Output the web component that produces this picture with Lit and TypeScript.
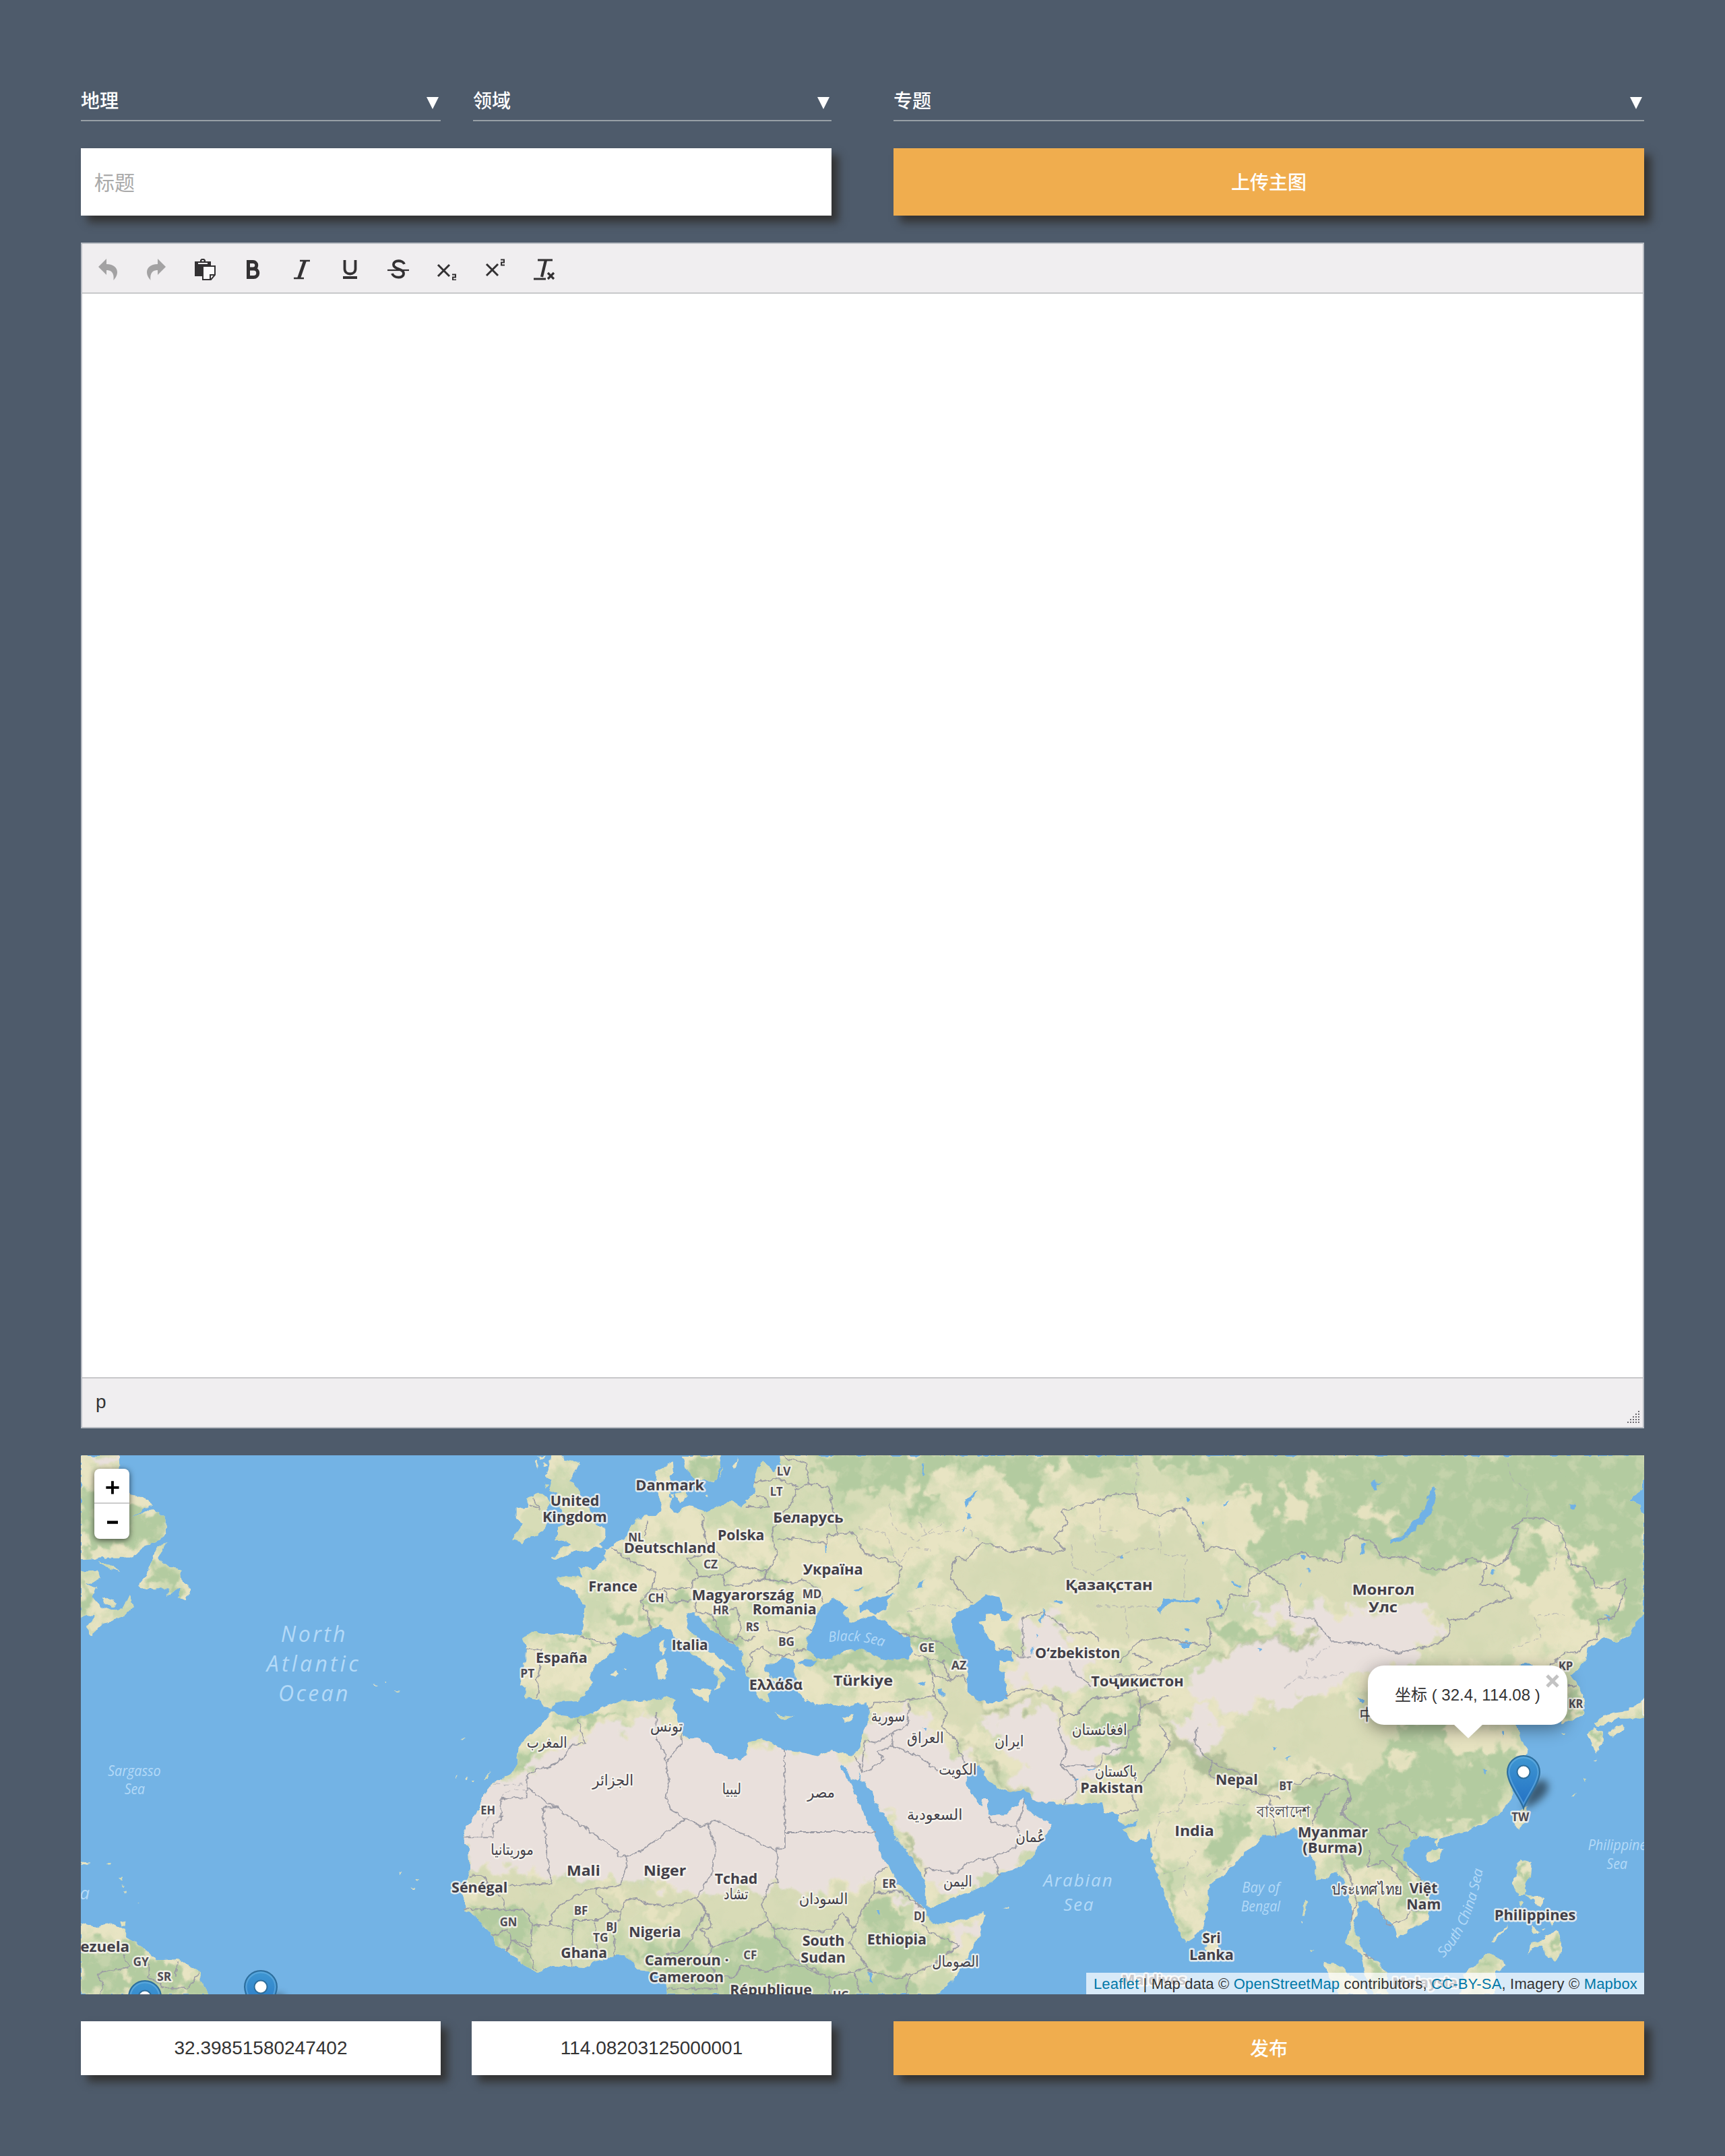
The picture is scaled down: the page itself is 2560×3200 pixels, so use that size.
import { LitElement, html, svg, css } from "lit";
import { customElement } from "lit/decorators.js";

/* Map geometry is digitised in sheets; each sheet has an origin and a scale. */
type Sheet = [number, number, number, number];
const N1: Sheet = [100, 2140, 2.6133, 3];
const N2: Sheet = [660, 2140, 3, 3];
const N3: Sheet = [1100, 2140, 3, 3];
const N4: Sheet = [1560, 2140, 3, 3];
const N5: Sheet = [2000, 2140, 3, 3];
const S1: Sheet = [100, 2540, 2.8, 2.8];
const S2: Sheet = [620, 2540, 3, 3];
const S3: Sheet = [1100, 2540, 3, 3];
const S4: Sheet = [1560, 2540, 3, 3];
const S5: Sheet = [1980, 2540, 3, 2.8];

const pts = (s: Sheet, d: string) =>
  d.trim().split(/\s+/).map((p) => {
    const [x, y] = p.split(",").map(Number);
    return `${(s[0] + x / s[2]).toFixed(1)} ${(s[1] + y / s[3]).toFixed(1)}`;
  }).join(" L");
const path = (...parts: [Sheet, string][]) => "M" + parts.map(([s, d]) => pts(s, d)).join(" L") + "Z";
const line = (s: Sheet, d: string) => "M" + pts(s, d);

const mainland = path(
  [N3, "170,40 175,100 150,135 125,115 100,85 75,110 60,150 60,190 65,235 20,262 20,280 0,290"],
  [N2, "1280,262 1215,285 1160,312 1120,290 1075,285 1045,310 1020,315 1005,285 1010,230 1000,185 1005,150 1020,130 1015,88 975,118 945,130 940,180 955,250 968,300 940,330 910,330 850,345 835,375 820,400 795,430 750,465 715,480 715,525 660,565 610,560 598,550 610,600 545,598 500,605 510,635 575,655 600,700 622,735 620,800 608,865 520,855 470,860 440,855 390,845 345,875 360,910 358,970 345,1050 335,1080 360,1100 358,1140 420,1145 445,1180 475,1185 500,1160 590,1155 625,1120 660,1070 645,1050 660,1010 700,970 750,935 768,905 760,875 795,852 870,870 920,835 960,815 1000,830 1020,870 1060,900 1100,950 1150,975 1195,1010 1220,1055 1205,1105 1225,1090 1245,1050 1225,1010 1240,990 1288,1020 1280,1000 1230,970 1190,940 1160,925 1130,880 1085,830 1075,770 1110,755 1120,775 1150,800 1200,850 1290,900 1320,930"],
  [N3, "5,980 20,1030 50,1090 80,1130 110,1160 130,1155 120,1120 150,1100 130,1060 105,1010 110,985 150,985 180,965 230,970 240,990 235,1040 250,1110 290,1150 340,1180 400,1160 450,1180 500,1170 560,1160 570,1200"],
  [S3, "560,70 540,110 525,160 505,195 430,185 400,175 340,200 280,185 200,175 130,140 90,120 30,135 20,190 0,220"],
  [S2, "1430,222 1330,185 1290,145 1240,120 1180,115 1175,60 1155,40"],
  [N2, "1035,1210 1015,1180 1035,1150 985,1135 940,1150 860,1155 780,1150 690,1190 640,1215 590,1225 510,1218 480,1195 470,1195"],
  [S2, "580,10 560,50 500,100 465,140 445,190 440,240 420,280 335,320 300,370 270,440 215,520 200,565 225,610 230,700 215,750 195,810 210,850 210,880 250,905 300,960 335,1000 350,1045 400,1070 460,1120 525,1160 600,1130 690,1135 740,1140 800,1110 870,1090 920,1085 950,1110 980,1155 1070,1165 1100,1190 1110,1230 1100,1290"],
  [S3, "830,1290 950,1190 1010,1090 1060,1000 1085,910 1070,900 1030,915 950,935 870,950 840,935 825,900 800,860 740,810 700,770 660,690 620,640 600,560 555,490 545,450 490,330 450,260 445,240 460,245 490,300 515,315 530,258 528,310 545,310 570,345 610,430 660,490 690,570 740,620 790,700 815,760 815,830 830,865 860,868 950,830 1050,790 1120,755 1160,720 1230,700 1300,650 1315,600 1380,520 1360,490 1300,460 1265,420 1255,385 1230,420 1180,455 1110,465 1095,430 1095,390 1075,390 1070,430 1030,370 1000,310 1010,280 1060,240 1090,300 1140,345 1200,360 1260,345 1290,385 1340,405 1440,415"],
  [S4, "70,415 230,405 240,450 300,460 300,490 330,505 385,480 375,510 320,530 350,570 380,582 420,565 430,530 445,570 450,650 490,780 540,900 570,990 600,1030 630,1010 680,950 700,850 700,770 760,735 830,670 870,620 920,590 940,550 1000,550 1050,535 1080,515 1110,560 1140,610 1180,680 1180,755 1230,745 1270,710"],
  [S5, "40,700 60,750 72,800 78,860 52,960 80,980 120,1010 135,1090 180,1190 240,1190 230,1090 195,1040 130,1000 108,940 82,900 100,850 112,788 140,788 190,815 220,860 270,890 280,942 340,905 420,870 430,800 400,710 350,660 310,620 310,580 350,530 400,515 450,530 460,560 470,530 540,510 600,490 680,460 750,410 790,360 800,300 840,220 862,165 830,120 815,60"],
  [N5, "745,1250 700,1240 660,1200 720,1120 700,1050 760,1000 785,978 810,995 850,1020 900,1080 950,1100 940,1150 960,1200 950,1255 1000,1240 1050,1215 1055,1160 1030,1090 990,1040 1060,980 1070,920 1100,900 1140,865 1190,890 1250,865 1280,810 1320,770 1350,740 1350,330 1310,315 1300,280 1258,260 1285,235 1350,190 1350,40"],
);

const islands: [Sheet, string][] = [
  [N2, "475,40 530,40 525,80 598,90 585,130 555,175 600,215 610,250 640,290 660,330 670,370 715,385 715,420 690,450 705,465 620,485 560,490 530,510 475,528 520,470 560,455 530,440 485,435 510,420 510,380 560,350 520,300 480,260 500,230 470,210 470,170 450,150 465,110"],
  [N2, "410,232 450,240 475,270 450,310 455,360 440,400 380,430 340,450 305,430 330,390 345,360 320,345 320,295 365,290 370,250"],
  [N2, "1050,40 1070,110 1095,150 1110,165 1200,180 1215,150 1228,90 1230,40"],
  [N2, "1280,110 1305,72 1300,100 1288,124"], [N2, "1222,165 1238,112 1232,150"], [N2, "1030,225 1075,215 1080,250 1050,270 1035,250"],
  [N2, "1000,225 1022,228 1020,248 1002,244"], [N2, "1160,238 1176,240 1170,250"],
  [N2, "405,90 414,85 412,125"], [N2, "415,60 440,60 425,78"], [N2, "440,90 460,105 445,112"], [N2, "445,185 460,195 448,212"],
  [N2, "960,895 980,880 980,935 967,948 955,920"], [N2, "945,985 980,960 993,1000 980,1060 950,1065 945,1010"],
  [N2, "1085,1105 1110,1098 1190,1100 1175,1130 1172,1158 1120,1130"], [N2, "738,1035 765,1020 775,1030 760,1046"], [N2, "790,1015 808,1018 800,1024"],
  [N3, "145,1210 180,1218 235,1225 190,1233"], [N3, "445,1232 505,1212 490,1235 465,1248"], [N3, "280,1145 300,1150 290,1160"], [N3, "130,1045 165,1050 160,1085"],
  [S4, "690,975 730,1010 745,1070 715,1090 690,1060 685,1010"],
  [N5, "1065,1300 1100,1275 1140,1290 1135,1340 1110,1390 1085,1350"],
  [N5, "1100,1260 1140,1220 1200,1205 1250,1200 1290,1160 1350,1120 1350,1240 1290,1230 1250,1235 1190,1235 1120,1270"],
  [N5, "1160,1295 1220,1255 1232,1280 1175,1315"], [N5, "945,1298 970,1294 960,1305"],
  [S5, "835,400 860,395 850,450 825,500 795,465"], [S5, "410,600 440,575 490,570 470,615 435,630 412,620"],
  [S5, "815,630 835,615 875,630 870,690 845,720 850,760 830,770 795,720 800,690 815,690"],
  [S5, "865,765 905,770 940,780 920,810 890,785"], [S5, "820,790 845,800 830,815"], [S5, "878,895 912,918 890,925"], [S5, "925,900 948,900 935,915"],
  [S5, "955,820 980,830 970,890 960,880"], [S5, "850,760 880,770 870,780"],
  [S5, "865,1015 875,960 930,950 990,905 1015,960 1010,1000 980,1040 940,1010 925,970 880,985"],
  [S5, "700,950 780,880 770,900 710,955"], [S5, "580,1090 640,1050 690,1005 770,1050 720,1080 720,1190 560,1190"],
  [S4, "1210,1115 1290,1130 1320,1170 1380,1200 1420,1290 1300,1290 1240,1180"],
  [S4, "1128,845 1138,850 1130,905 1118,912"], [S4, "1112,935 1122,935 1118,945"], [S4, "1155,1060 1168,1068 1160,1076"],
  [S5, "1110,275 1126,275 1115,290"], [S5, "1055,355 1080,335 1070,350"], [S5, "1155,205 1168,198 1160,208"],
  [N1, "30,40 190,40 205,100 190,140 245,235 290,245 330,275 250,335 330,300 380,340 382,410 340,450 300,460 250,515 150,515 30,525"],
  [N1, "120,535 165,545 205,580 150,562"],
  [N1, "385,445 350,520 380,545 440,570 445,610 475,655 460,705 430,690 440,650 380,690 400,655 280,655 275,640 310,590 340,480"],
  [N1, "30,575 120,572 125,610 70,635 115,645 100,690 130,735 180,750 215,745 240,685 258,730 220,775 140,810 90,858 70,830 110,770 30,785"],
  [N1, "130,690 190,715 180,735 140,715"],
  [S1, "30,875 110,895 180,880 240,910 250,945 320,985 370,1035 460,1030 545,1080 560,1130 600,1200 30,1200"],
  [S1, "222,880 242,875 240,895 225,895"], [S1, "40,622 92,625 90,637 40,638"],
  [S1, "216,690 230,688 226,702 218,704"], [S1, "233,742 243,744 242,755"], [S1, "225,718 234,720 231,728"], [S1, "168,630 182,630 176,640"], [S1, "283,795 292,795 290,801"],
  [S1, "1376,665 1390,668 1382,675"], [S1, "1425,730 1438,732 1430,740"], [S1, "1452,697 1462,699 1456,706"],
  [S2, "295,300 320,268 305,300"], [S2, "240,310 255,308 250,320"], [S2, "205,302 220,292 214,306"], [S2, "165,285 172,285 170,298"], [S2, "190,122 208,122 200,128"],
  [S3, "1162,875 1195,873 1190,882"], [N1, "1180,1078 1205,1080 1195,1086"], [N1, "1225,1070 1235,1070 1230,1077"], [N1, "1268,1110 1292,1112 1280,1117"],
];

const lakes: [Sheet, string][] = [
  [N3, "290,890 315,830 350,740 400,705 440,710 475,735 455,765 485,805 530,785 590,775 640,800 690,840 750,880 765,930 740,965 690,970 640,972 570,940 520,925 450,935 400,965 340,960 300,930"],
  [N3, "530,765 525,730 590,695 680,675 645,710 640,745 600,770 560,745"], [N3, "250,985 280,970 340,975 320,1000 270,995"],
  [N3, "940,800 960,765 1030,725 1090,682 1150,695 1165,755 1210,770 1200,785 1165,805 1150,765 1090,770 1080,800 1060,805 1100,870 1140,925 1200,930 1210,975 1145,980 1145,1010 1175,1030 1185,1145 1120,1162 1060,1155 1010,1110 1010,1010 960,900"],
  [N5, "385,195 397,210 375,310 345,355 290,395 230,445 185,450 190,435 250,415 280,370 340,300 370,220"],
  [N4, "470,745 500,700 540,698 600,705 660,695 655,718 600,715 530,710 495,740 488,775"],
  [N4, "565,905 610,890 630,895 610,915 580,915"], [N4, "1110,505 1130,500 1142,515 1125,530 1110,520"], [N4, "1385,450 1398,450 1392,500 1380,498"],
  [N4, "798,620 850,645 848,655 800,630"], [N4, "735,712 750,712 765,745 750,745"], [N4, "1130,565 1158,575 1145,583"], [N4, "600,250 620,250 608,272"],
  [N4, "675,360 685,365 675,378"], [N4, "770,275 792,262 780,278"], [N4, "305,505 318,500 318,520 308,520"], [N4, "1105,640 1112,620 1116,625 1106,650"], [N4, "595,836 625,838 605,845"], [N4, "915,920 940,925 925,936"],
  [N4, "10,705 50,712 40,728"], [N4, "1365,1135 1395,1155 1385,1165 1368,1155"], [N4, "1425,180 1445,170 1445,215"],
  [N3, "1345,740 1350,745 1338,812 1328,805"], [N3, "1390,710 1430,708 1428,722"], [N3, "1308,858 1320,865 1312,876"], [N3, "1290,930 1300,910 1296,950"],
  [N3, "1015,240 1055,225 1030,250 1000,290 995,275"], [N3, "1000,310 1025,340 1010,340"], [N3, "985,405 998,370 992,400"], [N3, "780,655 800,625 818,615 805,650"], [N3, "500,660 545,652 540,664 505,665"],
  [N3, "785,1075 825,1065 810,1088"], [N3, "880,1100 890,1095 905,1138 888,1128"], [N3, "807,100 817,100 818,150 812,148"], [N3, "376,460 384,460 384,490 378,490"],
  [N5, "635,595 645,570 660,575 645,602"], [N5, "65,450 80,450 72,502 60,498"], [N5, "990,285 1015,270 1005,300"], [N5, "1145,775 1172,775 1160,800"], [N5, "108,185 150,178 128,190 130,215 112,210"],
  [N5, "50,1140 75,1150 70,1162 52,1155"], [S3, "605,888 622,885 615,905"], [S3, "568,1160 578,1160 580,1195 592,1220 570,1200"], [S3, "808,65 825,70 815,85"],
  [S4, "985,155 1008,160 995,172"], [S4, "1040,205 1070,200 1050,213"], [S5, "655,245 682,248 670,262"], [S5, "740,92 755,88 752,102"], [S4, "165,255 200,256 175,264"], [S4, "100,300 120,300 112,312"],
];

const steppe: [Sheet, string][][] = [
  [[N3, "880,660 900,520 1000,490 1200,490 1440,430"], [N4, "200,430 400,385 560,355 650,430 760,520 850,620 780,700 700,900 350,900 200,860 60,720"], [N3, "1250,760 1180,750 1140,680 1040,720"]],
  [[N4, "960,570 1150,480 1440,430"], [N5, "350,570 700,550 740,700 900,750 700,960 500,1000 300,1020 450,800 400,760 0,740"], [N4, "1200,700 1060,650"]],
  [[S4, "640,140 900,30 1100,-100 1380,-30"], [S5, "250,20 250,100 200,260 0,240"], [S4, "1050,200 900,290 700,220"]],
  [[S2, "200,710 420,720 600,770 780,780 950,750 1200,820 1350,820 1560,770"], [S3, "150,800 400,830 550,750 660,800 700,900 560,960 160,970 0,960"], [S2, "1300,960 900,870 600,880 220,850"]],
  [[N3, "880,1000 1000,1000 1050,1160 1250,1150 1420,1200"], [S3, "1280,60 1100,40 1000,120 900,60"]],
];
const meadow: [Sheet, string][][] = [
  [[N3, "0,60 800,60 700,300 450,400 200,400 0,500"]],
  [[N4, "150,80 700,130 850,250 700,280 400,230 0,230"]],
  [[N2, "330,400 480,200 720,420 600,520"]],
  [[S2, "200,850 900,870 1560,960"], [S3, "160,970 700,900 860,1290 0,1290"], [S2, "150,1290"]],
];
const forest: [Sheet, string][][] = [
  [[N3, "300,40 1440,40"], [N4, "0,40 1440,40"], [N5, "1340,40 1340,700 1250,870 1120,860 1040,800 1000,560 940,400 800,350 720,500 560,520 430,570 330,550 150,500 0,400"], [N4, "1300,520 1150,470 1000,560 850,480 930,400 900,260 780,190 650,130 400,90 200,140 0,100"], [N3, "1340,200 1290,430 1250,200 1100,130 900,120 760,380 780,180 600,200 480,250 400,180"]],
  [[N5, "720,500 850,400 930,500 830,600 740,700 760,600"]],
  [[S5, "270,50 500,60 540,200 700,150 820,180 780,360 650,460 500,500 380,510 320,620 400,700 420,800 340,880 260,700 180,640 60,640 0,500 40,300 180,250"]],
  [[S4, "1100,330 1280,270 1400,380 1400,620 1300,640 1340,800 1260,640 1170,500 1080,400"]],
  [[S2, "210,880 500,880 540,1000 480,1060 520,1180"]],
  [[S2, "1180,1030 1330,1050 1560,950"], [S3, "200,1050 400,1180 760,1170 760,1290 0,1290"], [S2, "1090,1290"]],
  [[S3, "560,820 700,830 730,1000 900,1000 960,1060 700,1150 560,1100"]],
  [[S2, "950,1100 1060,1030 1220,1090 1100,1170"]],
  [[S4, "690,600 760,500 860,430 900,560 800,680 700,690"]],
  [[N3, "640,790 760,820 880,870 990,980 930,1000 800,900"]],
  [[N3, "290,990 450,940 600,960 800,960 860,1030 700,1000 500,1010"]],
  [[N3, "100,560 220,630 180,640 90,590"]],
  [[N2, "900,720 1080,700 1100,740 960,760 920,830"]], [[N2, "1130,770 1280,800 1330,1000 1200,840"]],
  [[N2, "700,760 840,740 760,840"]], [[N2, "380,860 620,870 740,900 600,910"]], [[N2, "1090,60 1240,60 1220,180 1110,160"]],
  [[N1, "40,180 110,260 380,320 360,460 60,500"]], [[N1, "60,590 110,650 90,740 40,760"]], [[N1, "80,820 130,780 110,840"]], [[N1, "330,520 440,580 440,650 300,650"]],
  [[S1, "40,990 280,950 600,1180 40,1180"]], [[S2, "450,200 540,180 520,240 440,270"]], [[S2, "590,60 740,20 940,-20 800,60"]],
  [[S4, "445,600 480,650 560,880 640,1020 580,980 500,800"]], [[S5, "640,1060 690,1010 750,1060"]], [[S5, "820,630 865,640 840,740"]], [[S5, "140,1020 230,1080 220,1160 160,1160"]],
  [[S4, "150,60 400,-20 400,200 300,260 260,180"]], [[N4, "720,800 960,850 1180,860 960,890 760,910"]],
  [[S5, "960,940 1010,950 1000,1000 960,980"]], [[N5, "1080,1290 1130,1300 1100,1360"]], [[N5, "980,1100 1050,1140 1040,1210 970,1230"]],
];
const ridges: [Sheet, string][][] = [
  [[S4, "490,40 600,120 720,200 860,280 960,320 1100,320 1200,260 1200,290 1080,350 930,350 700,280 560,170"]],
  [[N4, "400,1160 520,1140 560,1190 420,1230"]], [[S3, "960,110 1060,220 1180,300 1300,340 1240,350 1080,270"]],
  [[N4, "680,940 900,900 1180,870 1180,890 900,920 700,950"]], [[S3, "715,565 760,600 810,690 800,700 740,610"]],
  [[N3, "1010,1110 1090,1180 1200,1180 1340,1110 1340,1130 1200,1200 1080,1200"]],
];
const desert: [Sheet, string][][] = [
  [[S2, "720,90 940,50 1060,20 1180,110 1560,180"], [S3, "130,150 480,200 640,290 620,640 700,690 560,750 460,760 300,830 130,790"], [S2, "1350,810 1200,800 950,740 800,750 600,740 420,710 180,700 190,560 340,330 560,220"]],
  [[S3, "540,60 740,-60 800,20 860,120 1000,200 1100,380 1380,420 1400,520 1300,660 1120,750 900,800 830,700 700,520 550,300"]],
  [[S3, "1080,30 1300,-20 1420,30 1460,200 1440,400 1280,340 1180,150"]],
  [[N3, "1250,790 1420,790"], [N4, "60,900 200,960 180,1080 60,1120 0,1080"], [N3, "1200,1080 1180,1000 1250,960"]],
  [[S4, "30,130 220,120 320,160 210,250 100,400 -100,400"]],
  [[N4, "860,730 1100,730 1440,780"], [N5, "0,740 400,770 440,850 320,940 200,1050 0,1020"], [N4, "1380,1010 1200,1130 1040,1180 800,1200 560,1100 600,1020 760,950 960,900 1200,880 1000,810"]],
  [[S4, "520,40 700,-20 740,60 720,160 650,180 600,90"]], [[S3, "700,810 820,900 830,930 740,880"]], [[S3, "940,960 1070,910 1060,1010 980,1030"]],
  [[N1, "60,55 200,55 180,110 90,90"]],
];
const plains: [Sheet, string][][] = [
  [[N5, "860,560 930,480 1000,580 1010,720 960,900 760,1000 800,860 850,700"]], [[N5, "1060,720 1120,650 1230,630 1200,740"]], [[N5, "980,470 1080,440 1080,540 1020,550"]],
  [[S5, "260,170 380,160 350,240 260,250 230,210"]], [[S5, "480,60 800,80 850,160 700,140 540,200"]], [[N4, "1030,200 1130,290 1120,370 1040,370"]],
  [[N4, "680,370 820,270 910,380 880,440 780,460"]], [[N4, "1140,160 1230,150 1200,240 1130,190"]], [[N4, "840,190 920,240 940,330 860,280"]],
  [[S2, "980,880 1160,870 1150,940 1000,930"]], [[S2, "830,780 950,770 940,830 830,820"]], [[N5, "20,250 130,300 250,350 200,400 100,340"]], [[S5, "180,640 260,670 240,720 120,720"]],
  [[N4, "0,320 300,250 520,270 380,430 220,420 180,380 60,380"]], [[S1, "230,1080 270,1070 260,1130 225,1120"]], [[N2, "920,760 1080,760 1100,800 940,820"]],
  [[N3, "200,470 420,440 640,540 680,640 400,690 220,600"]], [[N3, "560,330 760,400 860,470 780,540 560,480"]],
];

const borders: [Sheet, string][] = [
  [S2, "715,30 725,90 745,145 680,150 655,200 590,250 540,255 485,285 485,385 370,387 370,485 335,500 335,562 200,562"],
  [S2, "485,340 820,570 890,620 890,643 930,643 980,630 1190,480 1125,435 1105,380 1118,320 1105,230 1175,140 1175,100"],
  [S2, "1062,0 1060,50 1065,130 1095,170 1105,230"], [S2, "620,428 555,428 570,560 585,720 598,745 592,770 400,775"],
  [S2, "930,643 928,700 900,775 790,790 740,800 640,860 600,900 590,950 510,955 490,900 470,880 395,885 370,830"],
  [S2, "790,790 830,850 865,890 905,890 925,840 975,830 1020,858 1110,865 1180,850 1240,830 1310,720 1325,600 1293,500 1265,512 1190,480"],
  [S2, "1293,500 1328,485 1600,625"], [S2, "905,890 875,980 875,1088"], [S2, "1245,830 1285,890 1240,970 1180,1070 1110,1080"],
  [S2, "1245,835 1300,920 1310,965 1260,970 1310,1050 1430,1010 1560,930"], [S2, "590,950 690,975 690,930 800,930 860,890"], [S2, "690,975 685,1135"], [S2, "790,940 800,1100"],
  [S2, "525,1160 490,1060 420,1020 400,970 330,1000"], [S2, "510,955 500,1050 420,1015 395,1070"], [S2, "210,880 320,880 395,885"], [S2, "230,735 280,730 370,820"],
  [S2, "1110,1235 1330,1235 1330,1180 1410,1185 1440,1130 1560,1160"], [S2, "1310,1050 1290,1100 1330,1180"],
  [S3, "192,165 195,610 160,610 160,765 125,770 90,860 120,930 150,970 290,970 340,980 400,970 450,890 500,970 530,900 590,810 600,720 655,690"],
  [S3, "195,537 600,537"], [S3, "145,1000 250,1110 390,1185 500,1160 560,1140 480,1030 510,970"], [S3, "145,1000 150,970"],
  [S3, "560,1150 690,1190 760,1170 850,1130 970,1040 850,990 800,940"], [S3, "740,1265 740,1200 760,1170"], [S3, "100,1165 200,1130 250,1130 390,1185 395,1270"],
  [S3, "590,810 710,800 810,880"], [S3, "500,1165 530,1250"], [S3, "535,265 570,265 635,215 605,180 675,155 810,210 875,265"],
  [S3, "675,155 670,100 740,60 750,-40"], [S3, "670,100 600,140 550,130"], [S3, "510,195 535,270 550,130"], [S3, "915,0 895,70 960,130 970,190 1000,235"],
  [S3, "1100,470 1140,505 1225,512 1250,450 1260,390"], [S3, "1225,512 1240,560 1220,610 1120,650 1150,730"], [S3, "1120,650 1010,670 960,720 820,700 815,740"],
  [S3, "1430,0 1410,80 1450,180 1420,240 1490,300 1490,360 1445,390 1440,415"], [S4, "40,240 220,245 230,190 330,160 350,80 390,60 400,-20"],
  [S4, "485,60 530,140 490,220 410,310 360,370 385,440 310,455"], [S4, "650,70 640,140 680,200 740,240 830,270 860,310"], [S4, "720,215 700,280 850,345 960,370 1025,385"],
  [S4, "1080,330 1200,270 1300,300 1330,340 1330,400 1290,460 1350,500 1400,540"], [S4, "965,370 990,480 1003,560"], [S4, "1280,340 1220,370 1180,450 1160,510"], [S4, "1290,640 1330,740 1360,850 1330,940"],
  [S5, "0,270 60,290 70,350 30,420 100,470"], [S5, "370,515 290,460 190,490 230,540 280,560 260,600 330,660 400,710"], [S5, "160,580 150,650 220,620 300,700"], [S5, "200,780 200,830 240,890 310,870 340,830 430,820"], [S5, "130,1010 180,1035"],
  [N2, "380,285 420,300 395,250"], [N2, "600,868 690,890 768,905"], [N2, "360,920 430,925 425,1000 410,1060 420,1100 405,1140"],
  [N2, "745,470 800,515 870,550 940,580 925,650 870,710 900,760 920,840"], [N2, "925,655 1000,655 1100,650 1100,620 1140,600 1075,520 1160,500"],
  [N2, "1150,320 1145,370 1165,450 1220,500 1290,550 1430,575 1430,605 1320,640 1245,640 1240,595 1140,600"], [N2, "1240,595 1300,550"], [N2, "905,350 890,420"],
  [N2, "1115,700 1120,760 1190,765 1300,740 1320,830 1290,890"], [N2, "1190,770 1230,860 1290,900"], [N2, "980,660 1000,720 1110,700"], [N2, "1300,860 1350,890 1380,870"],
  [N3, "110,610 110,590 160,500 135,420 160,330 215,290 250,210 300,185 290,100 170,62"], [N3, "60,180 160,165 250,200"], [N3, "60,240 115,250 120,290 20,288"],
  [N3, "300,185 390,205 410,300 430,410 500,405 550,500 640,520 710,555 700,630 645,675"], [N3, "160,435 240,430 380,455 385,415 430,412"],
  [N3, "100,610 240,630 270,610 340,650 365,715"], [N3, "110,800 120,840 200,850 260,825 315,840"], [N3, "40,940 100,910 125,950 235,950 240,930 290,925"], [N3, "40,940 50,975 25,1030"],
  [N3, "770,945 830,960 850,1030 860,1130 700,1160 590,1160 570,1190"], [N3, "700,850 880,890 990,960"], [N3, "830,960 900,980 930,1060 990,1040 1005,1080"], [N3, "850,1030 930,1065"], [N3, "860,1130 915,1200"],
  [N3, "1025,720 970,660 935,610 940,550 960,510 1000,530 1070,445 1200,490 1300,470 1380,495"],
  [N3, "1145,920 1200,915 1235,958 1290,958"], [N3, "1253,955 1253,780 1340,760 1380,780"], [N3, "1180,1130 1270,1095 1360,1120 1425,1160 1430,1210"],
  [N4, "0,495 60,480 10,430 75,360 45,310 300,230 380,235 390,295 480,330 585,288 640,370 690,485 720,465 820,485 870,550 940,575 1110,490 1180,520 1290,540 1310,450 1335,415 1440,450"],
  [N4, "950,580 1050,660 1065,775 1170,790 1250,890 1440,900"], [N4, "940,575 885,610 880,690 795,680 770,770 690,790 715,860 700,920 580,980 490,1010 480,1040 260,1040"],
  [N4, "0,780 80,850 180,850 215,890"], [N4, "300,985 370,910 390,890 490,870 560,885 700,910"], [N4, "360,940 450,980 390,1010"], [N4, "80,980 100,1030 180,1090"],
  [N4, "0,1140 45,1160 50,1215 110,1215 180,1140 300,1135 380,1100 400,1180 520,1130"], [N4, "400,1180 390,1250"],
  [N5, "120,460 150,515 260,510 340,560 430,572 550,520 620,540 660,555 710,520 760,390 735,380 790,340 870,340 940,380 970,460 1000,550 1060,560 1110,650 1160,650 1235,610 1240,650 1190,780 1115,790 1115,880 1080,880 1020,940 965,940 900,1000"],
  [N5, "620,540 590,640 680,635 735,695 640,715 520,795 450,790 460,850 400,900 220,940 100,900 0,897"], [N5, "980,1088 1020,1088"],
  [S1, "230,1010 260,1060 125,1090 150,1140 130,1180"], [S1, "340,1050 340,1100 400,1150 500,1150 550,1085"], [S1, "460,1040 450,1100"],
];
const provinces: [Sheet, string][] = [
  [S2, "340,325 485,325"], [S2, "370,387 395,355 480,350"], [S2, "285,555 300,490 330,450"],
  [N3, "520,380 640,410 700,540"], [N3, "700,540 760,470 850,480"], [N3, "660,280 680,380 780,440 900,360"], [N3, "790,360 830,410 1000,390 1060,440"], [N3, "740,760 840,720 960,740"],
  [N4, "215,290 220,400 300,400"], [N4, "90,460 95,560 190,590 310,500"], [N4, "480,370 490,500 600,510 590,690"], [N4, "190,410 200,490 300,510 400,470 480,480"], [N4, "200,735 480,735"], [N4, "330,740 340,880"],
  [N4, "380,60 385,150 370,230"], [N4, "1040,1090 1100,1050 1200,1050 1300,1030"], [N4, "1130,1040 1140,980 1240,910"],
  [N5, "710,90 730,160 800,220 800,330"], [N5, "830,780 860,870 740,920"], [N5, "840,770 980,770"], [N5, "920,580 930,490"],
  [S4, "500,730 600,690 640,620"], [S4, "600,730 590,800 610,830"], [S4, "640,420 740,400 860,420"], [S4, "480,460 560,440 600,380 590,260"], [S4, "460,580 480,470"], [S4, "690,730 800,690"],
];

type Kind = "country" | "code" | "native" | "sea" | "ocean";
const labels: [Sheet, number, number, number, string, Kind][] = [
  [N2, 470, 688, 285, "United", "country"], [N2, 435, 722, 357, "Kingdom", "country"], [N2, 850, 1155, 215, "Danmark", "country"], [N2, 817, 887, 443, "NL", "code"],
  [N2, 797, 1207, 495, "Deutschland", "country"], [N2, 1215, 1423, 438, "Polska", "country"], [N2, 1152, 1215, 565, "CZ", "code"], [N2, 640, 858, 667, "France", "country"],
  [N2, 905, 977, 714, "CH", "code"], [N2, 1100, 1555, 706, "Magyarország", "country"], [N2, 1193, 1265, 768, "HR", "code"], [N2, 1010, 1172, 926, "Italia", "country"],
  [N2, 405, 635, 984, "España", "country"], [N2, 337, 400, 1050, "PT", "code"],
  [N3, 158, 220, 150, "LV", "code"], [N3, 128, 185, 240, "LT", "code"], [N3, 142, 455, 360, "Беларусь", "country"], [N3, 275, 542, 592, "Україна", "country"],
  [N3, 272, 358, 696, "MD", "code"], [N3, 50, 335, 768, "Romania", "country"], [N3, 20, 80, 842, "RS", "code"], [N3, 165, 237, 910, "BG", "code"], [N3, 793, 860, 937, "GE", "code"],
  [N3, 935, 1003, 1015, "AZ", "code"], [N3, 35, 273, 1105, "Ελλάδα", "country"], [N3, 410, 675, 1087, "Türkiye", "country"], [N3, 578, 730, 1245, "سورية", "native"],
  [N3, 1308, 1687, 962, "Oʻzbekiston", "country"], [N4, 63, 452, 660, "Қазақстан", "country"], [N4, 178, 590, 1090, "Тоҷикистон", "country"], [N4, 1372, 1440, 1240, "中", "native"],
  [N5, 20, 298, 680, "Монгол", "country"], [N5, 93, 222, 760, "Улс", "country"], [N5, 938, 1003, 1018, "KP", "code"], [N5, 983, 1048, 1185, "KR", "code"], [N5, 1308, 1376, 1207, "日", "native"],
  [S2, 485, 665, 163, "المغرب", "native"], [S2, 1035, 1180, 90, "تونس", "native"], [S2, 778, 960, 330, "الجزائر", "native"], [S2, 1355, 1440, 370, "ليبيا", "native"], [S2, 280, 345, 460, "EH", "code"],
  [S2, 325, 515, 640, "موريتانيا", "native"], [S2, 663, 812, 733, "Mali", "country"], [S2, 1005, 1195, 733, "Niger", "country"], [S2, 1322, 1513, 768, "Tchad", "country"], [S2, 1362, 1472, 837, "تشاد", "native"],
  [S2, 150, 400, 808, "Sénégal", "country"], [S2, 695, 757, 905, "BF", "code"], [S2, 365, 442, 958, "GN", "code"], [S2, 838, 888, 978, "BJ", "code"], [S2, 780, 848, 1027, "TG", "code"],
  [S2, 940, 1172, 1005, "Nigeria", "country"], [S2, 637, 843, 1098, "Ghana", "country"], [S2, 1010, 1385, 1132, "Cameroun ·", "country"], [S2, 1030, 1362, 1205, "Cameroon", "country"],
  [S2, 1450, 1510, 1103, "CF", "code"], [S2, 1390, 1755, 1262, "République", "country"],
  [S3, 738, 902, 141, "العراق", "native"], [S3, 1128, 1258, 155, "ایران", "native"], [S3, 880, 1048, 281, "الكويت", "native"], [S3, 295, 417, 385, "مصر", "native"], [S3, 738, 985, 482, "السعودية", "native"],
  [S3, 1222, 1353, 583, "عُمان", "native"], [S3, 900, 1028, 780, "اليمن", "native"], [S3, 628, 690, 785, "ER", "code"], [S3, 768, 820, 930, "DJ", "code"], [S3, 257, 475, 857, "السودان", "native"],
  [S3, 272, 460, 1045, "South", "country"], [S3, 265, 465, 1118, "Sudan", "country"], [S3, 560, 825, 1037, "Ethiopia", "country"], [S3, 850, 1058, 1137, "الصومال", "native"], [S3, 408, 480, 1283, "UG", "code"],
  [S3, 1345, 1652, 780, "Arabian", "ocean"], [S3, 1435, 1567, 888, "Sea", "ocean"],
  [S4, 92, 338, 105, "افغانستان", "native"], [S4, 195, 382, 292, "پاکستان", "native"], [S4, 130, 410, 362, "Pakistan", "country"], [S4, 732, 920, 327, "Nepal", "country"], [S4, 1015, 1075, 350, "BT", "code"],
  [S4, 915, 1155, 470, "বাংলাদেশ", "native"], [S4, 550, 725, 555, "India", "country"], [S4, 1098, 1410, 560, "Myanmar", "country"], [S4, 1120, 1385, 630, "(Burma)", "country"], [S4, 1247, 1562, 815, "ประเทศไทย", "native"],
  [S4, 850, 1018, 808, "Bay of", "sea"], [S4, 845, 1020, 890, "Bengal", "sea"], [S4, 673, 755, 1033, "Sri", "country"], [S4, 615, 812, 1108, "Lanka", "country"], [S4, 313, 600, 1218, "Maldives", "country"],
  [S5, 790, 868, 457, "TW", "code"], [S5, 335, 460, 755, "Việt", "country"], [S5, 322, 475, 822, "Nam", "country"], [S5, 713, 1075, 867, "Philippines", "country"], [S5, 1130, 1390, 577, "Philippine", "sea"],
  [S5, 1213, 1305, 655, "Sea", "sea"], [S5, 258, 550, 1148, "Malaysia", "country"],
  [N1, 828, 1078, 892, "North", "ocean"], [N1, 773, 1128, 1023, "Atlantic", "ocean"], [N1, 818, 1088, 1155, "Ocean", "ocean"],
  [S1, 168, 388, 270, "Sargasso", "sea"], [S1, 237, 322, 345, "Sea", "sea"], [S1, 55, 88, 780, "a", "ocean"], [S1, -66, 258, 1000, "Venezuela", "country"], [S1, 273, 338, 1058, "GY", "code"], [S1, 373, 432, 1120, "SR", "code"],
];

@customElement("world-map")
export class WorldMap extends LitElement {
  static styles = css`
    :host { display: block; width: 100%; height: 100%; }
    .map { display: block; width: 100%; height: 100%; background: #73b3e5; }
    text { font-family: "Open Sans", "Noto Sans", "DejaVu Sans", "Noto Sans CJK SC", sans-serif; }
    .country, .code, .native { fill: #423f49; stroke: #f7f5ef; stroke-opacity: .85; stroke-width: 5px; stroke-linejoin: round; paint-order: stroke; }
    .country { font-size: 22px; font-weight: 700; }
    .code { font-size: 18px; font-weight: 700; fill: #4d4a53; }
    .native { font-size: 23px; font-family: "DejaVu Sans", "Noto Sans", "Noto Sans CJK SC", sans-serif; }
    .sea, .ocean { fill: #b4daf8; font-style: italic; }
    .sea { font-size: 21px; }
    .ocean { font-size: 28px; }
    .south { font-size: 26px; }
    .north { font-size: 32px; }
  `;

  render() {
    const areas = (list: [Sheet, string][][], fill: string) => list.map((a) => svg`<path d=${path(...a)} fill=${fill}></path>`);
    const land = mainland + islands.map((i) => path(i)).join("");
    return html`<svg class="map" viewBox="120 2160 2320 800" preserveAspectRatio="none">
      <defs>
        <clipPath id="land"><path d=${land}></path></clipPath>
        <filter id="coast" filterUnits="userSpaceOnUse" x="120" y="2160" width="2320" height="800" color-interpolation-filters="sRGB">
          <feTurbulence type="fractalNoise" baseFrequency="0.09" numOctaves="2" seed="4"></feTurbulence>
          <feDisplacementMap in="SourceGraphic" scale="9" xChannelSelector="R" yChannelSelector="G"></feDisplacementMap>
        </filter>
        <filter id="wobble" filterUnits="userSpaceOnUse" x="120" y="2160" width="2320" height="800" color-interpolation-filters="sRGB">
          <feTurbulence type="fractalNoise" baseFrequency="0.12" numOctaves="2" seed="7"></feTurbulence>
          <feDisplacementMap in="SourceGraphic" scale="8" xChannelSelector="R" yChannelSelector="G"></feDisplacementMap>
        </filter>
        <filter id="edge" filterUnits="userSpaceOnUse" x="120" y="2160" width="2320" height="800" color-interpolation-filters="sRGB">
          <feTurbulence type="fractalNoise" baseFrequency="0.035" numOctaves="4" seed="9"></feTurbulence>
          <feDisplacementMap in="SourceGraphic" scale="60" xChannelSelector="R" yChannelSelector="G"></feDisplacementMap>
          <feGaussianBlur stdDeviation="1.5"></feGaussianBlur>
        </filter>
        <filter id="woods" filterUnits="userSpaceOnUse" x="120" y="2160" width="2320" height="800" color-interpolation-filters="sRGB">
          <feTurbulence type="fractalNoise" baseFrequency="0.022" numOctaves="5" seed="21"></feTurbulence>
          <feColorMatrix values="0 0 0 0 .73  0 0 0 0 .82  0 0 0 0 .65  5 0 0 0 -2.35"></feColorMatrix>
        </filter>
        <filter id="hills" filterUnits="userSpaceOnUse" x="120" y="2160" width="2320" height="800" color-interpolation-filters="sRGB">
          <feTurbulence type="fractalNoise" baseFrequency="0.04" numOctaves="4" seed="33"></feTurbulence>
          <feColorMatrix values="0 0 0 0 .86  0 0 0 0 .87  0 0 0 0 .73  0 5 0 0 -2.6"></feColorMatrix>
        </filter>
      </defs>
      <g filter="url(#coast)">
        <g clip-path="url(#land)">
          <rect x="120" y="2160" width="2320" height="800" fill="#e8e4c3"></rect>
          <g filter="url(#edge)">${areas(meadow, "#d7dcb7")}</g>
          <rect x="120" y="2160" width="2320" height="800" filter="url(#woods)" opacity=".6"></rect>
          <g filter="url(#edge)" opacity=".85">${areas(steppe, "#d6dab6")}</g>
          <g filter="url(#edge)">${areas(forest, "#b3cba0")}${areas(plains, "#e6e2c0")}</g>
          <rect x="120" y="2160" width="2320" height="800" filter="url(#hills)" opacity=".42"></rect>
          <g filter="url(#edge)">${areas(desert, "#e9e0dc")}</g>
          <g filter="url(#edge)" opacity=".55">${areas(ridges, "#97ab86")}</g>
        </g>
        ${lakes.map((l) => svg`<path d=${path(l)} fill="#70b1e6"></path>`)}
      </g>
      <g filter="url(#coast)" fill="none" stroke-linejoin="round">
        ${provinces.map(([s, d]) => svg`<path d=${line(s, d)} stroke="#a9a9b0" stroke-opacity=".6" stroke-width="1.3" stroke-dasharray="8 4"></path>`)}
      </g>
      <g filter="url(#wobble)" fill="none" stroke-linejoin="round">
        ${borders.map(([s, d]) => svg`<path d=${line(s, d)} stroke="#9b9ba4" stroke-width="1.8"></path>`)}
      </g>
      ${labels.map(([s, x0, x1, y, text, kind]) => {
        const w = (x1 - x0) / s[2];
        const mode = kind === "ocean" ? "spacing" : "spacingAndGlyphs";
        const size = kind !== "ocean" ? "" : s === N1 ? "north" : "south";
        return svg`<text class="${kind} ${size}" text-anchor="middle" x=${s[0] + (x0 + x1) / 2 / s[2]} y=${s[1] + y / s[3]} textLength=${w} lengthAdjust=${mode}>${text}</text>`;
      })}
      <path id="curve-black" d="M1230 2437 Q1274 2431 1316 2446" fill="none"></path>
      <text class="sea"><textPath href="#curve-black" textLength="82" lengthAdjust="spacingAndGlyphs">Black Sea</textPath></text>
      <path id="curve-china" d="M2142 2906 Q2185 2865 2202 2768" fill="none"></path>
      <text class="sea"><textPath href="#curve-china" textLength="146">South China Sea</textPath></text>
    </svg>`;
  }
}

const icons = {
  undo: svg`<path d="M2 12 14 0v8c11 0 16 6 16 12 0 5-3 9-5.500 12C25 26 25 17 14 17v7z" fill="currentColor"></path>`,
  redo: svg`<path d="M30 12 18 0v8C7 8 2 14 2 20c0 5 3 9 5.500 12C7 26 7 17 18 17v7z" fill="currentColor"></path>`,
  paste: svg`<path d="M1 4h8V2l2-2h4l2 2v2h8v6H13v16H1z" fill="currentColor"></path><path d="M6 6h14v2H6zM11.500 2h3v2h-3z" fill="#f0eef0"></path><path d="M13 11h18v13l-6 7H13z" fill="#fbfafb" stroke="currentColor" stroke-width="2"></path><path d="M24 31v-7h7" fill="none" stroke="currentColor" stroke-width="2"></path>`,
  bold: svg`<path d="M8.500 4.500v23h8a6 6 0 0 0 0-12.500h-8 7a5 5 0 0 0 0-10.500z" fill="none" stroke="currentColor" stroke-width="5"></path>`,
  italic: svg`<path d="M13 3h15M4 29h15" stroke="currentColor" stroke-width="2.400"></path><path d="M20.500 3 11.500 29" stroke="currentColor" stroke-width="4.800"></path>`,
  underline: svg`<path d="M8.500 2v13c0 10 16 10 16 0V2" fill="none" stroke="currentColor" stroke-width="3.800"></path><path d="M6 28h21" stroke="currentColor" stroke-width="4"></path>`,
  strike: svg`<path d="M25 8C23 2 9 1 9 9c0 7 15 5 15 13 0 8-15 7-17 0" fill="none" stroke="currentColor" stroke-width="3.800"></path><path d="M0 17h32" stroke="currentColor" stroke-width="2.200"></path>`,
  sub: svg`<path d="M3 9l17 17M20 9 3 26" stroke="currentColor" stroke-width="3"></path><path d="M24 23.500h5v4h-4v4h5" fill="none" stroke="currentColor" stroke-width="2"></path>`,
  sup: svg`<path d="M3 8l17 17M20 8 3 25" stroke="currentColor" stroke-width="3"></path><path d="M24 1.500h5v4h-4v4h5" fill="none" stroke="currentColor" stroke-width="2"></path>`,
  clear: svg`<path d="M7 2h22M1 30h18M22 21l9 9M31 21l-9 9" stroke="currentColor" stroke-width="3.200"></path><path d="M19 2 13 27" stroke="currentColor" stroke-width="4.200"></path>`,
};
const tools: [keyof typeof icons, boolean][] = [
  ["undo", false], ["redo", false], ["paste", true], ["bold", true], ["italic", true],
  ["underline", true], ["strike", true], ["sub", true], ["sup", true], ["clear", true],
];
const pins = [{ x: 2116, y: 445 }, { x: 242, y: 764 }, { x: 70, y: 779 }];

@customElement("app-root")
export class AppRoot extends LitElement {
  static styles = css`
    :host { display: block; }
    * { box-sizing: border-box; }
    .page {
      width: 2560px; height: 3200px; padding: 120px; display: flex; flex-direction: column;
      background: #4e5b6b; color: #333; overflow: hidden;
      font: 28px "Liberation Sans", "Noto Sans CJK SC", sans-serif;
    }
    .filters, .footer { display: flex; flex: none; }
    .filters { height: 60px; }
    .w1 { width: 534px; margin-right: 48px; }
    .w2 { width: 532px; margin-right: 92px; }
    .half { width: 534px; margin-right: 46px; }
    .half + .half { margin-right: 92px; }
    .w12 { width: 1114px; margin-right: 92px; }
    .w3 { width: 1114px; }
    .select {
      height: 60px; border-bottom: 2px solid #97a0a6; color: #fff; font-weight: 500;
      display: flex; align-items: center; justify-content: space-between; padding: 3px 3px 0 0;
      line-height: 55px;
    }
    .arrow { width: 18px; height: 18px; margin-top: 4px; display: block; }
    .heading { display: flex; height: 100px; margin-top: 40px; flex: none; }
    .box { background: #fff; box-shadow: 10px 10px 12px #333; display: flex; align-items: center; }
    .title { padding: 0 0 2px 20px; font-size: 30px; color: #a9a9a9; }
    .button { background: #f0ad4e; color: #fff; justify-content: center; font-weight: 500; padding-bottom: 3px; }
    .value { justify-content: center; }
    .editor {
      height: 1760px; margin-top: 40px; flex: none; display: flex; flex-direction: column;
      border: 2px solid #b9bdc4; background: #fff;
    }
    .toolbar {
      height: 74px; padding: 4px 2px 0; display: flex; align-items: center;
      background: #f0eef0; border-bottom: 2px solid #c8c8ca; flex: none;
    }
    .tool { width: 71.9px; height: 32px; display: flex; justify-content: center; color: #333133; }
    .tool svg { width: 32px; height: 32px; display: block; }
    .off { color: #a3a2a3; }
    .canvas { flex: 1; }
    .status {
      height: 74px; padding: 2px 4px 5px 20px; display: flex; align-items: center; justify-content: space-between;
      background: #f0eef0; border-top: 2px solid #c8c8ca; flex: none;
    }
    .grip { width: 22px; height: 20px; align-self: flex-end; }
    .mapbox { position: relative; height: 800px; margin-top: 40px; overflow: hidden; flex: none; }
    .zoom {
      position: absolute; left: 20px; top: 20px; width: 52px; height: 104px; border-radius: 8px;
      background: #fff; box-shadow: 0 2px 10px rgba(0, 0, 0, .65);
      display: flex; flex-direction: column;
    }
    .zoom svg { width: 52px; height: 52px; display: block; }
    .in { border-bottom: 2px solid #ccc; }
    .pin { position: absolute; width: 100px; height: 84px; overflow: visible; }
    .popup {
      position: absolute; left: 1910px; top: 312px; width: 296px; height: 88px; border-radius: 24px;
      background: #fff; box-shadow: 0 6px 26px rgba(0, 0, 0, .42);
      font-size: 24px; line-height: 88px; padding-left: 40px; white-space: nowrap;
    }
    .tip { position: absolute; left: 127px; top: 87px; width: 44px; height: 22px; }
    .close { position: absolute; left: 263px; top: 12px; width: 22px; height: 22px; }
    .credit {
      position: absolute; right: 0; bottom: 0; width: 828px; height: 32px; padding-right: 10px;
      background: rgba(255, 255, 255, .72); font-size: 22px; line-height: 33px; letter-spacing: .17px;
      text-align: right; white-space: nowrap;
    }
    .link { color: #0078a8; }
    .footer { height: 80px; margin-top: 40px; }
  `;

  private select(label: string, width: string) {
    return html`<div class="select ${width}"><span>${label}</span>
      <svg class="arrow" viewBox="0 0 18 18"><path d="M0 0h18L9 18z" fill="#fff"></path></svg></div>`;
  }

  private pin(x: number, y: number) {
    return html`<svg class="pin" style="left:${x}px;top:${y}px" viewBox="0 0 100 84">
      <defs>
        <linearGradient id="body" x1="0" y1="0" x2="0" y2="1"><stop offset="0" stop-color="#3f97d2"></stop><stop offset="1" stop-color="#226fc4"></stop></linearGradient>
        <filter id="soft" x="-60%" y="-60%" width="220%" height="220%"><feGaussianBlur stdDeviation="6"></feGaussianBlur></filter>
      </defs>
      <path d="M25 80 C30 52 46 30 58 38 C70 50 52 70 25 80z" fill="#000" opacity=".5" filter="url(#soft)"></path>
      <path d="M25 79 C22 68 1 42 1 25 a24 24 0 0 1 48 0 C49 42 28 68 25 79z" fill="url(#body)" stroke="#2e6e9c" stroke-width="2"></path>
      <path d="M25 73 C21 62 3.500 40 3.500 25 a21.500 21.500 0 0 1 43 0 C46.500 40 29 62 25 73z" fill="none" stroke="#6fb4e4" stroke-opacity=".55" stroke-width="2"></path>
      <circle cx="25" cy="25" r="9.500" fill="#fff" stroke="#2e6e9c" stroke-width="2"></circle>
    </svg>`;
  }

  render() {
    return html`<div class="page">
      <div class="filters">
        ${this.select("地理", "w1")}${this.select("领域", "w2")}${this.select("专题", "w3")}
      </div>
      <div class="heading">
        <div class="box title w12">标题</div>
        <div class="box button w3">上传主图</div>
      </div>
      <div class="editor">
        <div class="toolbar">
          ${tools.map(([name, on]) => html`<span class="tool ${on ? "" : "off"}"><svg viewBox="0 0 32 32">${icons[name]}</svg></span>`)}
        </div>
        <div class="canvas"></div>
        <div class="status"><span>p</span>
          <svg class="grip" viewBox="0 0 22 20">${[0, 1, 2, 3, 4].map((r) =>
            Array.from({ length: r + 1 }, (_, c) => svg`<rect x=${19 - c * 4} y=${1 + r * 4} width="2" height="2" fill="#6c6a70"></rect>`))}</svg>
        </div>
      </div>
      <div class="mapbox">
        <world-map></world-map>
        ${pins.map((p) => this.pin(p.x, p.y))}
        <div class="zoom">
          <svg class="in" viewBox="0 0 52 52"><path d="M17 29h20M27 19v20" stroke="#000" stroke-width="4"></path></svg>
          <svg viewBox="0 0 52 52"><path d="M19 27.500h16" stroke="#000" stroke-width="4.500"></path></svg>
        </div>
        <div class="popup">坐标 ( 32.4, 114.08 )
          <svg class="tip" viewBox="0 0 44 22"><path d="M0 0h44L22 21z" fill="#fff"></path></svg>
          <svg class="close" viewBox="0 0 22 22"><path d="M3 3l16 16M19 3 3 19" stroke="#c3c3c3" stroke-width="5"></path></svg>
        </div>
        <div class="credit"><span class="link">Leaflet</span> | Map data © <span class="link">OpenStreetMap</span> contributors, <span class="link">CC-BY-SA</span>, Imagery © <span class="link">Mapbox</span></div>
      </div>
      <div class="footer">
        <div class="box value half">32.39851580247402</div>
        <div class="box value half">114.08203125000001</div>
        <div class="box button w3">发布</div>
      </div>
    </div>`;
  }
}
